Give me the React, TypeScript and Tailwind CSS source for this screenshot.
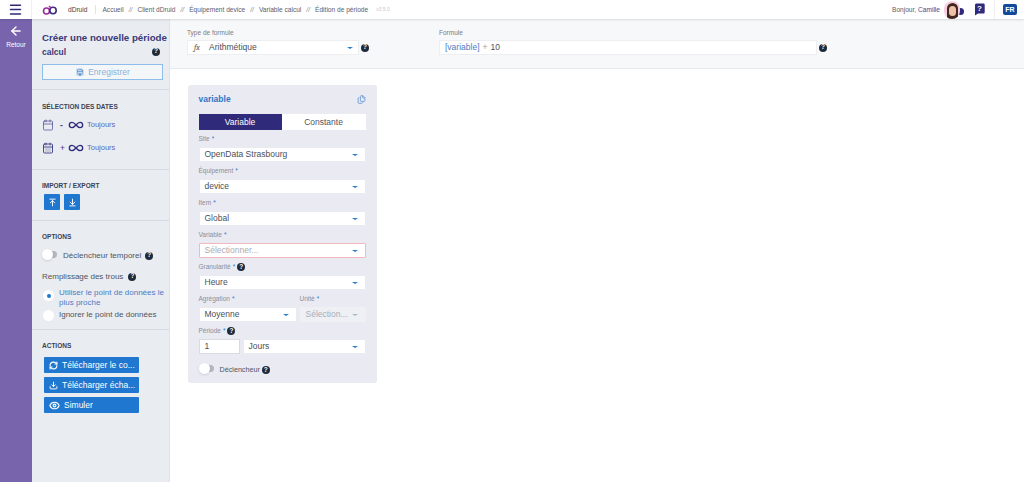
import { ArrowLeft, Calendar, CalendarDays, Eye, Infinity as InfinityIcon, Save, Files, ArrowUpToLine, ArrowDownToLine, Download, RefreshCw, Menu } from 'lucide-react';

function Help({ className = '' }: { className?: string }) {
  return (
    <span className={`inline-flex items-center justify-center w-[8px] h-[8px] shrink-0 rounded-full bg-[#1f2a3a] text-white text-[6.5px] font-bold leading-none ${className}`}>?</span>
  );
}

function Caret({ color = 'border-t-[#2a7bd0]' }: { color?: string }) {
  return <span className={`w-0 h-0 border-x-[3px] border-x-transparent border-t-[2.5px] ${color}`} />;
}

function Select({ value, placeholder, error, disabled, className = '' }: { value: string; placeholder?: boolean; error?: boolean; disabled?: boolean; className?: string }) {
  return (
    <div className={`h-[15px] flex items-center justify-between pl-[5px] pr-[7px] text-[8.5px] rounded-[1px] border ${error ? 'border-[#f2b8bd] bg-white' : disabled ? 'border-[#eef0f4] bg-[#eef0f4]' : 'border-[#e9ebf1] bg-white'} ${placeholder ? 'text-[#a9adb6]' : 'text-[#4a4f58]'} ${className}`}>
      <span>{value}</span>
      <Caret color={disabled ? 'border-t-[#a9b9d0]' : 'border-t-[#2a7bd0]'} />
    </div>
  );
}

function Field({ label, help, children }: { label: string; help?: boolean; children: React.ReactNode }) {
  return (
    <div>
      <div className="h-[17px] pt-[1px] flex items-center gap-[2px] text-[6.5px] text-[#8a8e99]">
        {label} <span className="text-[#2a7bd0]">*</span>
        {help && <Help />}
      </div>
      {children}
    </div>
  );
}

function SideTitle({ children }: { children: React.ReactNode }) {
  return <div className="text-[6.5px] font-bold text-[#3c4250] h-[9px] leading-[9px]">{children}</div>;
}

function ActionButton({ icon, label }: { icon: React.ReactNode; label: string }) {
  return (
    <div className="w-[95px] h-[16px] bg-[#2077cf] text-white text-[8.5px] flex items-center gap-[4px] pl-[5px] rounded-[1px]">
      {icon}
      <span>{label}</span>
    </div>
  );
}

function Toggle() {
  return (
    <span className="relative w-[14px] h-[7px] rounded-full bg-[#b4b7bf] shrink-0 inline-block">
      <span className="absolute -left-px -top-[2px] w-[11px] h-[11px] rounded-full bg-white shadow-sm" />
    </span>
  );
}

export default function App() {
  return (
    <div className="w-[1024px] h-[482px] overflow-hidden flex flex-col bg-white" style={{ fontFamily: '"Liberation Sans", Arial, sans-serif' }}>
      {/* Top bar */}
      <header className="h-[19px] shrink-0 flex items-center bg-white shadow-[0_1px_2px_rgba(0,0,0,0.12)] z-10 text-[6.6px] text-[#5b6070]">
        <div className="w-[32px] h-full flex items-center justify-center border-r border-[#f0f0f0]">
          <Menu size={15} strokeWidth={2.4} className="text-[#2f2a7a]" />
        </div>
        <svg width="16" height="10" viewBox="0 0 16 10" className="ml-[10px]">
          <circle cx="4.5" cy="6" r="3" fill="none" stroke="#a02a9b" strokeWidth="1.6" />
          <circle cx="11" cy="5.5" r="3.2" fill="none" stroke="#3a2f85" strokeWidth="1.6" />
          <path d="M7 1l2 2" stroke="#a02a9b" strokeWidth="1.4" />
        </svg>
        <span className="ml-[10px] text-[#3c4250]">dDruid</span>
        <span className="ml-[8px] w-px h-[9px] bg-[#e2e2e2]" />
        <nav className="ml-[6px] flex items-center gap-[5px]">
          <span>Accueil</span><i className="text-[#888]">//</i>
          <span>Client dDruid</span><i className="text-[#888]">//</i>
          <span>Équipement device</span><i className="text-[#888]">//</i>
          <span>Variable calcul</span><i className="text-[#888]">//</i>
          <span>Édition de période</span>
        </nav>
        <span className="ml-[8px] text-[5px] text-[#c4c6cc]">v3.5.0</span>
        <div className="ml-auto flex items-center">
          <span>Bonjour, <span className="text-[#4a4690]">Camille</span></span>
          <span className="relative ml-[4px] w-[16px] h-[18px] rounded-full bg-[#f7cfe0] overflow-hidden flex items-end justify-center">
            <span className="w-[11px] h-[16px] rounded-t-full bg-[#3d2720] flex justify-center items-end">
              <span className="w-[7px] h-[10px] mb-[3px] rounded-full bg-[#eec0a5]" />
            </span>
          </span>
          <span className="w-[7px] h-[7px] -ml-[3px] mt-[3px] rounded-full bg-[#2f2a7a]" />
          <span className="relative ml-[10px] w-[11px] h-[13px] inline-block">
            <svg width="11" height="13" viewBox="0 0 11 13">
              <path d="M2 0.5h7.5a1.2 1.2 0 0 1 1.2 1.2v7.6a1.2 1.2 0 0 1-1.2 1.2H4L1 12.5V1.5z" fill="#2f2a7a" />
            </svg>
            <span className="absolute inset-x-0 top-0 h-[11px] text-center text-white text-[8px] font-bold leading-[11px]">?</span>
          </span>
          <span className="ml-[9px] w-px h-[19px] bg-[#efefef]" />
          <span className="ml-[8px] mr-[7px] w-[14px] h-[11px] rounded-[2px] bg-[#124a9b] text-white text-[7px] font-bold leading-[11px] text-center">FR</span>
        </div>
      </header>

      <div className="flex-1 flex min-h-0">
        {/* Back rail */}
        <aside className="w-[32px] shrink-0 bg-[#7764ad] text-white flex flex-col items-center pt-[5px]">
          <ArrowLeft size={14} strokeWidth={2.5} />
          <span className="text-[6.5px] mt-[2px]">Retour</span>
        </aside>

        {/* Sidebar */}
        <aside className="w-[138px] shrink-0 bg-[#e9ecf1] border-r border-[#dfe2e8]">
          <div className="h-[71px] pl-[10px] pr-[7px] pt-[12px] border-b border-[#d6d9df]">
            <div className="text-[9.7px] leading-[13px] font-bold text-[#3a3a78] whitespace-nowrap">Créer une nouvelle période</div>
            <div className="mt-[3px] flex items-center justify-between pr-[2px] text-[8.5px] font-bold text-[#3a3a78] h-[11px]">
              calcul <Help className="-mt-[2px]" />
            </div>
            <div className="mt-[6px] w-[121px] h-[16px] border border-[#8fbce8] bg-[#f4f7fa] flex items-center justify-center gap-[3px] text-[8.5px] text-[#8fb0d6]">
              <Save size={10} fill="#6f9fd4" stroke="#f4f7fa" />
              Enregistrer
            </div>
          </div>

          <div className="h-[80px] pl-[10px] pt-[12px] border-b border-[#d6d9df]">
            <SideTitle>SÉLECTION DES DATES</SideTitle>
            <div className="mt-[7px] h-[14px] flex items-center text-[7.5px] text-[#5a6ab8]">
              <Calendar size={12} strokeWidth={1.3} className="text-[#3a3a88]" />
              <span className="ml-[6px] w-[6px] text-[#3a3a88] font-bold text-[8.5px]">-</span>
              <InfinityIcon size={16} strokeWidth={2} className="ml-[2px] text-[#2f2a7a]" />
              <span className="ml-[3px]">Toujours</span>
            </div>
            <div className="mt-[9px] h-[14px] flex items-center text-[7.5px] text-[#5a6ab8]">
              <CalendarDays size={12} strokeWidth={1.8} className="text-[#3a3a88]" />
              <span className="ml-[6px] w-[6px] text-[#3a3a88] text-[8.5px]">+</span>
              <InfinityIcon size={16} strokeWidth={2} className="ml-[2px] text-[#2f2a7a]" />
              <span className="ml-[3px]">Toujours</span>
            </div>
          </div>

          <div className="h-[51px] pl-[10px] pt-[11px] border-b border-[#d6d9df]">
            <SideTitle>IMPORT / EXPORT</SideTitle>
            <div className="mt-[4px] ml-[2px] flex gap-[4px]">
              <span className="w-[16px] h-[16px] bg-[#2077cf] rounded-[1px] flex items-center justify-center text-white"><ArrowUpToLine size={9} strokeWidth={2.5} /></span>
              <span className="w-[16px] h-[16px] bg-[#2077cf] rounded-[1px] flex items-center justify-center text-white"><ArrowDownToLine size={9} strokeWidth={2.5} /></span>
            </div>
          </div>

          <div className="h-[109px] pl-[10px] pt-[11px] border-b border-[#d6d9df] text-[8px] text-[#50555f]">
            <SideTitle>OPTIONS</SideTitle>
            <div className="mt-[9px] h-[11px] flex items-center">
              <span className="ml-[1px]"><Toggle /></span>
              <span className="ml-[6px]">Déclencheur temporel</span>
              <Help className="ml-[4px]" />
            </div>
            <div className="mt-[10px] h-[11px] flex items-center">
              Remplissage des trous <Help className="ml-[5px]" />
            </div>
            <div className="mt-[6px] flex items-start">
              <span className="mt-[2px] ml-px w-[11px] h-[11px] rounded-full bg-white flex items-center justify-center shrink-0">
                <span className="w-[4px] h-[4px] rounded-full bg-[#2077cf]" />
              </span>
              <span className="ml-[5px] leading-[10px] text-[#4d7cc4]">Utiliser le point de données le plus proche</span>
            </div>
            <div className="mt-[1px] flex items-center">
              <span className="ml-px w-[11px] h-[11px] rounded-full bg-white shrink-0" />
              <span className="ml-[5px]">Ignorer le point de données</span>
            </div>
          </div>

          <div className="pl-[10px] pt-[11px]">
            <SideTitle>ACTIONS</SideTitle>
            <div className="mt-[7px] ml-[2px] flex flex-col gap-[4px]">
              <ActionButton icon={<RefreshCw size={9} strokeWidth={3} />} label="Télécharger le co..." />
              <ActionButton icon={<Download size={9} strokeWidth={2.5} />} label="Télécharger écha..." />
              <ActionButton icon={<Eye size={11} strokeWidth={2.5} />} label="Simuler" />
            </div>
          </div>
        </aside>

        {/* Main */}
        <main className="flex-1 min-w-0">
          <div className="h-[50px] bg-[#f7f8fa] border-b border-[#e6e8ec] pl-[17px] pt-[9px] flex">
            <div>
              <div className="h-[9px] leading-[9px] text-[6.5px] text-[#777c86]">Type de formule</div>
              <div className="mt-[3px] flex items-center">
                <div className="w-[172px] h-[15px] bg-white border border-[#eceef2] flex items-center pl-[6px] pr-[5px] text-[8.5px] text-[#4a4f58]">
                  <span className="w-[15px] italic font-serif text-[8px] text-[#555]">fx</span>
                  Arithmétique
                  <span className="ml-auto flex"><Caret /></span>
                </div>
                <Help className="ml-[2px]" />
              </div>
            </div>
            <div className="ml-[70px]">
              <div className="h-[9px] leading-[9px] text-[6.5px] text-[#777c86]">Formule</div>
              <div className="mt-[3px] flex items-center">
                <div className="w-[378px] h-[15px] bg-white border border-[#eceef2] flex items-center pl-[5px] text-[8.5px] text-[#4a4f58]">
                  <span className="text-[#4d7cc4]">[variable]</span>
                  <span className="mx-[3px] text-[#999]">+</span>10
                </div>
                <Help className="ml-[2px]" />
              </div>
            </div>
          </div>

          <div className="ml-[17.5px] mt-[16px] w-[189px] h-[298px] bg-[#e9eaf2] rounded-[3px] px-[11px]">
            <div className="h-[29px] flex items-center justify-between">
              <span className="text-[8.5px] font-bold text-[#2f76c4]">variable</span>
              <Files size={9} strokeWidth={2.5} className="text-[#6f9fd4]" />
            </div>
            <div className="h-[16px] flex text-[8.5px]">
              <div className="w-[83px] bg-[#2f2a7a] text-white flex items-center justify-center">Variable</div>
              <div className="flex-1 bg-white text-[#50555f] flex items-center justify-center">Constante</div>
            </div>
            <Field label="Site"><Select value="OpenData Strasbourg" /></Field>
            <Field label="Équipement"><Select value="device" /></Field>
            <Field label="Item"><Select value="Global" /></Field>
            <Field label="Variable"><Select value="Sélectionner..." placeholder error /></Field>
            <Field label="Granularité" help><Select value="Heure" /></Field>
            <div className="flex gap-[3px]">
              <div className="w-[98px]"><Field label="Agrégation"><Select value="Moyenne" /></Field></div>
              <div className="flex-1"><Field label="Unité"><Select value="Sélection..." placeholder disabled /></Field></div>
            </div>
            <Field label="Période" help>
              <div className="flex gap-[3px]">
                <div className="w-[41px] h-[15px] bg-white border border-[#d9dbe2] flex items-center pl-[5px] text-[8.5px] text-[#4a4f58]">1</div>
                <Select value="Jours" className="flex-1" />
              </div>
            </Field>
            <div className="mt-[11px] flex items-center text-[7.2px] text-[#50555f]">
              <span className="ml-px"><Toggle /></span>
              <span className="ml-[6px]">Déclencheur</span>
              <Help className="ml-[2px]" />
            </div>
          </div>
        </main>
      </div>
    </div>
  );
}
